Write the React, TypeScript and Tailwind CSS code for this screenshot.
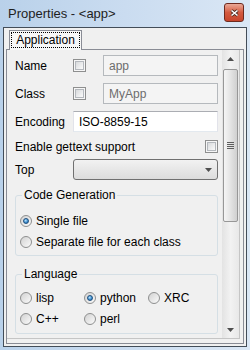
import React from "react";
import clsx from "clsx";

const CheckBox = () => (
    <div className="w-[13px] h-[13px] shrink-0 border border-[#8e8f8f] bg-[#f6f6f6] p-px">
        <div className="w-full h-full border border-[#b4b8bd] bg-gradient-to-br from-[#d8dadc] to-[#fbfbfb]" />
    </div>
);

const Radio = ({ on }: { on?: boolean }) => (
    <div className="w-[12px] h-[12px] shrink-0 rounded-full border border-[#8e8f8f] bg-gradient-to-br from-[#d2d2d2] to-[#fbfbfb] flex items-center justify-center">
        {on && (
            <div className="w-[6px] h-[6px] rounded-full border border-[#1f4f7d] bg-[radial-gradient(circle_at_40%_35%,#b4e2ff,#2b7fc4_70%)]" />
        )}
    </div>
);

const Field = ({ value, disabled, className }: { value: string; disabled?: boolean; className?: string }) => (
    <div
        className={clsx(
            "h-[21px] border pl-[5px] flex items-center",
            disabled
                ? "bg-[#f4f4f4] border-[#b5b9bd] text-[#6d6d6d]"
                : "bg-white border-[#abadb3] border-x-[#e2e3ea] border-b-[#e3e9ef] text-black",
            className
        )}
    >
        {value}
    </div>
);

const Arrow = ({ down }: { down?: boolean }) => (
    <svg width="7" height="4" viewBox="0 0 7 4">
        <path d={down ? "M0 0h7L3.5 4z" : "M0 4h7L3.5 0z"} fill="#4e4e4e" />
    </svg>
);

const Group: React.FC<{ title: string; className?: string; children: React.ReactNode }> = ({ title, className, children }) => (
    <fieldset className={clsx("border border-[#d5dfe5] rounded-[3px] pl-[4px]", className)}>
        <legend className="ml-[2px] px-[2px] leading-[16px]">{title}</legend>
        {children}
    </fieldset>
);

const App: React.FC = () => {
    return (
        <div className="w-[250px] h-[350px] flex flex-col bg-gradient-to-r from-[#b9d1ea] via-[#cadcf0] to-[#dae7f5] font-['Liberation_Sans',Arial,sans-serif] text-[12px] text-black">
            <div className="h-[27px] shrink-0 flex items-center justify-between pl-[8px] pr-[6px]">
                <span className="text-[13px] text-[#1e1e1e]">Properties - &lt;app&gt;</span>
                <div className="w-[20px] h-[19px] mb-[2px] rounded-[3px] border border-[#6e2a1f] bg-gradient-to-b from-[#e9a897] via-[#d45a40] to-[#c7452c] flex items-center justify-center">
                    <svg width="9" height="8" viewBox="0 0 9 8">
                        <path d="M1.5 1.5l6 5M7.5 1.5l-6 5" stroke="#4a2a20" strokeWidth="3.2" />
                        <path d="M1.5 1.5l6 5M7.5 1.5l-6 5" stroke="#fff" strokeWidth="1.6" />
                    </svg>
                </div>
            </div>

            <div className="flex-1 mx-[3px] mb-[3px] border border-[#434d58] bg-[#f0f0f0] px-[2px] pb-[2px] flex flex-col min-h-0">
                <div className="h-[21px] shrink-0 flex items-end">
                    <div className="relative z-10 -mb-px ml-[3px] w-[73px] h-[20px] border border-b-0 border-[#898c95] bg-[#f7f7f7] p-px">
                        <div className="h-[16px] border border-dotted border-black flex items-center justify-center leading-none">
                            Application
                        </div>
                    </div>
                </div>

                <div className="flex-1 min-h-0 border border-[#898c95] pr-[3px] pb-[4px] flex flex-col">
                    <div className="flex-1 min-h-0 flex border-r border-b border-[#c5c5c5] overflow-hidden">
                        <div className="flex-1 min-w-0 pl-[8px] pr-[4px] pt-[5px] flex flex-col">
                            <div className="h-[21px] flex items-center">
                                <span className="w-[58px]">Name</span>
                                <CheckBox />
                                <Field value="app" disabled className="ml-[17px] flex-1" />
                            </div>
                            <div className="h-[21px] mt-[7px] flex items-center">
                                <span className="w-[58px]">Class</span>
                                <CheckBox />
                                <Field value="MyApp" disabled className="ml-[17px] flex-1" />
                            </div>
                            <div className="h-[21px] mt-[7px] flex items-center">
                                <span className="w-[58px]">Encoding</span>
                                <Field value="ISO-8859-15" className="flex-1" />
                            </div>
                            <div className="h-[13px] mt-[8px] flex items-center">
                                <span className="flex-1">Enable gettext support</span>
                                <CheckBox />
                            </div>
                            <div className="h-[21px] mt-[6px] flex items-center">
                                <span className="w-[58px]">Top</span>
                                <div className="flex-1 h-[21px] rounded-[3px] border border-[#707070] bg-gradient-to-b from-[#f2f2f2] to-[#dcdcdc] flex items-center justify-end pr-[5px]">
                                    <Arrow down />
                                </div>
                            </div>

                            <Group title="Code Generation" className="mt-[7px] pt-[7px] pb-[3px]">
                                <div className="h-[21px] flex items-center gap-[4px]">
                                    <Radio on />
                                    <span>Single file</span>
                                </div>
                                <div className="h-[21px] flex items-center gap-[4px]">
                                    <Radio />
                                    <span>Separate file for each class</span>
                                </div>
                            </Group>

                            <Group title="Language" className="mt-[10px] pt-[5px] pb-[4px] shrink-0">
                                <div className="grid grid-cols-[64px_64px_auto]">
                                    {[
                                        ["lisp", false],
                                        ["python", true],
                                        ["XRC", false],
                                        ["C++", false],
                                        ["perl", false],
                                    ].map(([name, on]) => (
                                        <div key={name as string} className="h-[21px] flex items-center gap-[4px]">
                                            <Radio on={on as boolean} />
                                            <span>{name as string}</span>
                                        </div>
                                    ))}
                                </div>
                            </Group>
                        </div>

                        <div className="w-[17px] shrink-0 flex flex-col bg-gradient-to-r from-[#e3e3e3] via-[#f2f2f2] to-[#e8e8e8]">
                            <div className="h-[17px] flex items-center justify-center">
                                <Arrow />
                            </div>
                            <div className="mt-[2px] mx-px h-[153px] rounded-[2px] border border-[#979797] bg-gradient-to-r from-[#f5f5f5] via-[#e4e4e4] to-[#d0d0d0] flex items-center justify-center">
                                <div className="flex flex-col gap-px">
                                    <div className="w-[7px] h-px bg-[#5e5e5e]" />
                                    <div className="w-[7px] h-px bg-[#5e5e5e]" />
                                    <div className="w-[7px] h-px bg-[#5e5e5e]" />
                                    <div className="w-[7px] h-px bg-[#5e5e5e]" />
                                </div>
                            </div>
                            <div className="flex-1" />
                            <div className="h-[17px] flex items-center justify-center">
                                <Arrow down />
                            </div>
                        </div>
                    </div>
                </div>
            </div>
        </div>
    );
};

export default App;
